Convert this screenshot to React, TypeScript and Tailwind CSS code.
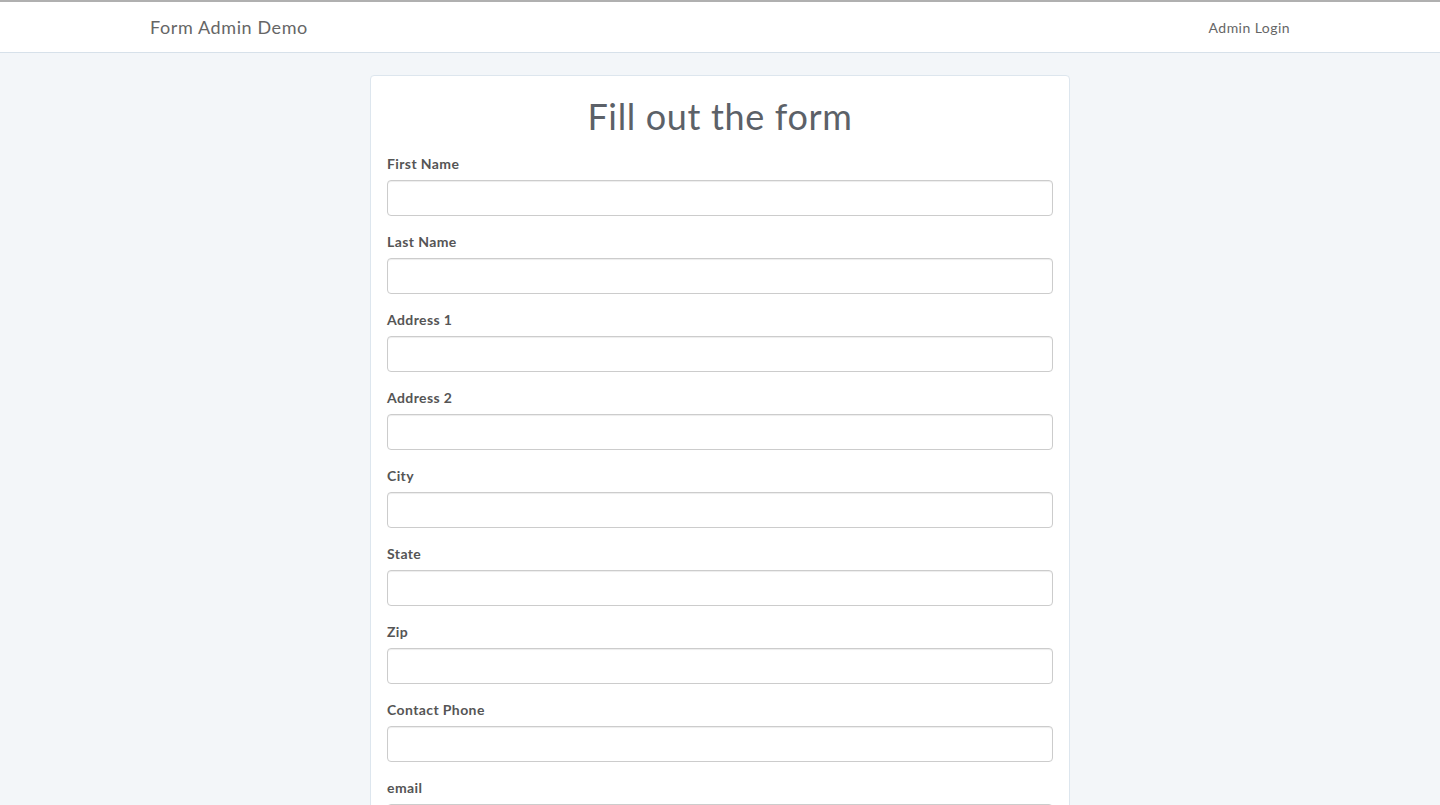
const fields = [
  'First Name',
  'Last Name',
  'Address 1',
  'Address 2',
  'City',
  'State',
  'Zip',
  'Contact Phone',
  'email',
  'Comments',
]

export default function App() {
  return (
    <div className="min-h-screen bg-[#f3f6f9] font-['Lato','Open_Sans',sans-serif] text-[#555]">
      <nav className="h-[53px] border-t-2 border-b border-t-[#b0b0b0] border-b-[#d7e1ea] bg-white">
        <div className="mx-auto flex h-full w-[1170px] items-center justify-between px-[15px]">
          <span className="text-[18px] tracking-[0.6px] text-[#666]">Form Admin Demo</span>
          <span className="text-[14px] tracking-[0.45px] text-[#666]">Admin Login</span>
        </div>
      </nav>

      <main className="pt-[22px]">
        <div className="mx-auto w-[700px] rounded-t border border-[#dde6ee] bg-white px-4 pt-[20px] pb-6">
          <h1 className="mb-[18px] text-center text-[36px] leading-[40px] tracking-[0.65px] text-[#5c6168]">
            Fill out the form
          </h1>
          <form>
            {fields.map(f => (
              <div key={f} className="mb-4">
                <label className="mb-[6px] block text-[14px] leading-5 font-bold tracking-[0.4px] text-[#555]">{f}</label>
                <input
                  type="text"
                  className="block h-9 w-full rounded border border-[#ccc] bg-white px-3 text-[14px] shadow-[inset_0_1px_1px_rgba(0,0,0,0.075)] outline-none"
                />
              </div>
            ))}
          </form>
        </div>
      </main>
    </div>
  )
}
